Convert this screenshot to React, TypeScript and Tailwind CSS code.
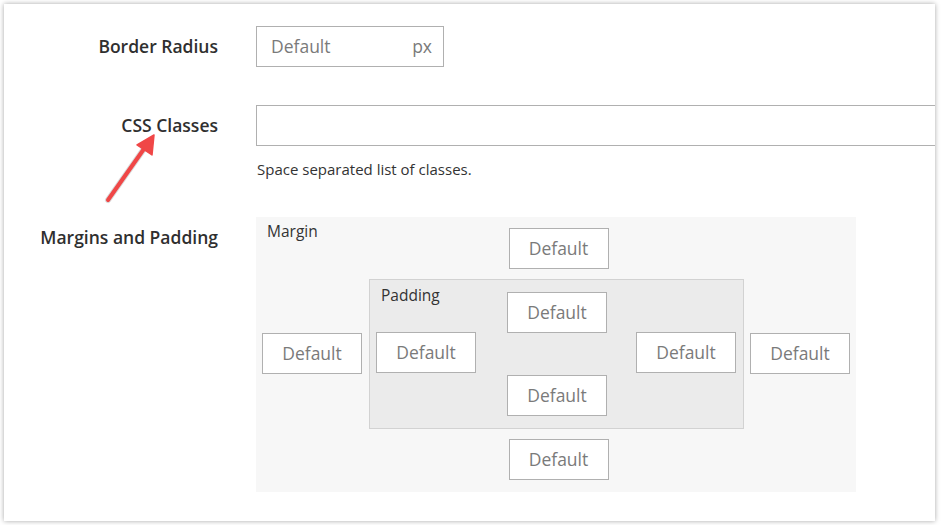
import React from 'react';

/**
 * Style settings panel: border radius, css classes and the margin/padding box.
 */

function BoxInput({ className = '' }: { className?: string }) {
  return (
    <div
      className={`w-[100px] h-[41px] bg-white border border-[#b0b0b0] flex items-center justify-center text-[17.5px] text-[#7a7a7a] ${className}`}
    >
      Default
    </div>
  );
}

function Label({ children, className = '' }: { children: React.ReactNode; className?: string }) {
  return (
    <div className={`w-[214px] shrink-0 text-right text-[17.5px] font-semibold text-[#2f2f2f] ${className}`}>
      {children}
    </div>
  );
}

export default function App() {
  return (
    <div className="w-[942px] h-[525px] bg-white pt-[4px] pl-[4px] font-['Open_Sans',sans-serif]">
      <div className="relative w-[931px] h-[517px] bg-white overflow-hidden shadow-[0_0_5px_rgba(0,0,0,0.35)] pt-[22px]">
        {/* Border Radius */}
        <div className="flex items-center">
          <Label>Border Radius</Label>
          <div className="ml-[38px] w-[188px] h-[41px] border border-[#b0b0b0] flex items-center justify-between pl-[14px] pr-[11px] text-[17.5px] text-[#7a7a7a]">
            <span>Default</span>
            <span>px</span>
          </div>
        </div>

        {/* CSS Classes */}
        <div className="flex items-center mt-[38px]">
          <Label>CSS Classes</Label>
          <div className="ml-[38px] w-[720px] h-[41px] shrink-0 border border-[#b0b0b0]" />
        </div>
        <div className="ml-[253px] mt-[13px] text-[15px] leading-[20px] text-[#333]">
          Space separated list of classes.
        </div>

        {/* Margins and Padding */}
        <div className="flex items-start mt-[38px]">
          <Label className="mt-[7px]">Margins and Padding</Label>
          <div className="ml-[38px] w-[600px] bg-[#f7f7f7] px-[6px] pt-[11px] pb-[12px] grid grid-cols-[100px_1fr_100px] gap-x-[6px] items-center">
            <div className="self-start -mt-[7px] ml-[5px] text-[15.5px] leading-[20px] text-[#333]">Margin</div>
            <div className="flex justify-center pl-[5px]">
              <BoxInput />
            </div>
            <div />

            <BoxInput className="col-start-1 mt-[8px]" />
            <div className="mt-[10px] ml-[1px] bg-[#ebebeb] border border-[#d2d2d2] pl-[6px] pr-[7px] pt-[12px] pb-[12px] grid grid-cols-[100px_1fr_100px] items-center">
              <div className="self-start -mt-[7px] ml-[5px] text-[15.5px] leading-[20px] text-[#333]">Padding</div>
              <div className="flex justify-center pl-[2px]">
                <BoxInput />
              </div>
              <div />
              <BoxInput className="-mt-[1px]" />
              <div />
              <BoxInput className="-mt-[1px]" />
              <div />
              <div className="flex justify-center pl-[2px] mt-[2px]">
                <BoxInput />
              </div>
              <div />
            </div>
            <BoxInput className="mt-[8px]" />

            <div />
            <div className="flex justify-center pl-[5px] mt-[10px]">
              <BoxInput />
            </div>
            <div />
          </div>
        </div>

        {/* Red annotation arrow pointing at the CSS Classes label */}
        <svg
          className="absolute left-0 top-0 pointer-events-none"
          width="931"
          height="517"
          viewBox="0 0 931 517"
        >
          <line x1="104" y1="196" x2="142" y2="142" stroke="rgba(0,0,0,0.15)" strokeWidth="6" strokeLinecap="round" />
          <line x1="104" y1="196" x2="142" y2="142" stroke="#f04747" strokeWidth="4" strokeLinecap="round" />
          <polygon points="150,131 148,151 133,141" fill="#f04747" stroke="#f04747" strokeWidth="1.5" strokeLinejoin="round" />
        </svg>
      </div>
    </div>
  );
}
